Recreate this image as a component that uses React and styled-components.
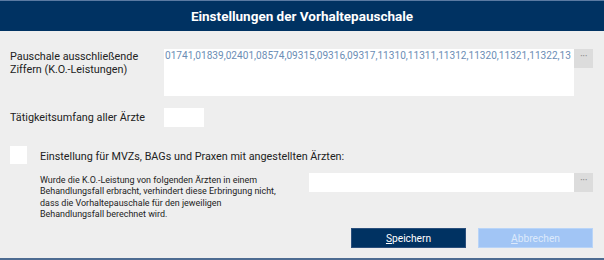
import React from "react";
import styled, { createGlobalStyle } from "styled-components";

const GlobalStyle = createGlobalStyle`
  html, body {
    margin: 0;
    padding: 0;
    background: #eeeeee;
  }
  body {
    font-family: Roboto, "Liberation Sans", sans-serif;
  }
`;

const Dialog = styled.div`
  width: 604px;
  height: 260px;
  box-sizing: border-box;
  background: #eeeeee;
  border-bottom: 2px solid #4d6b91;
  display: flex;
  flex-direction: column;
`;

const Header = styled.div`
  height: 31px;
  box-sizing: border-box;
  background: #003262;
  border-top: 1px solid #5a7aa2;
  color: #fff;
  font-weight: 700;
  font-size: 13.5px;
  display: flex;
  align-items: center;
  justify-content: center;
`;

const Body = styled.div`
  padding: 18px 11px 0 10px;
  display: flex;
  flex-direction: column;
`;

const Row = styled.div`
  display: flex;
  align-items: ${({ top }) => (top ? "flex-start" : "center")};
  margin-top: ${({ mt }) => mt || 0}px;
`;

const Label = styled.div`
  width: 154px;
  font-size: 10.8px;
  line-height: 13px;
  color: #222;
  padding-top: ${({ pt }) => pt || 0}px;
`;

const Area = styled.div`
  width: 410px;
  height: 47px;
  background: #fff;
  overflow: hidden;
  white-space: nowrap;
  font-size: 10.1px;
  color: #6b8db5;
  padding: 1px 0 0 1px;
  box-sizing: border-box;
`;

const Dots = styled.div`
  width: 19px;
  height: 19px;
  background: #dcdcdc;
  color: #8a8a8a;
  font-size: 11px;
  line-height: 16px;
  text-align: center;
  letter-spacing: -0.5px;
`;

const SmallInput = styled.div`
  width: ${({ w }) => w}px;
  height: 19px;
  background: #fff;
`;

const Check = styled.div`
  width: 17px;
  height: 18px;
  background: #fff;
  margin-right: 13px;
`;

const Heading = styled.div`
  font-size: 10.8px;
  color: #222;
  padding-top: 3px;
`;

const Note = styled.div`
  margin-left: 30px;
  padding-top: 4px;
  font-size: 8.95px;
  line-height: 11.3px;
  white-space: nowrap;
  color: #222;
`;

const Spacer = styled.div`
  flex: 1;
`;

const Buttons = styled.div`
  display: flex;
  justify-content: flex-end;
  gap: 12px;
  margin-top: 8px;
`;

const Button = styled.div`
  width: 115px;
  height: 20px;
  box-sizing: border-box;
  background: ${({ primary }) => (primary ? "#003262" : "#a1c5f5")};
  border: 1px solid ${({ primary }) => (primary ? "#2a4f7c" : "#b8d4f8")};
  color: ${({ primary }) => (primary ? "#fff" : "#dce9fb")};
  font-size: 10.2px;
  display: flex;
  align-items: center;
  justify-content: center;
  u {
    text-decoration: underline;
  }
`;

export default function App() {
  return (
    <>
      <GlobalStyle />
      <Dialog>
        <Header>Einstellungen der Vorhaltepauschale</Header>
        <Body>
          <Row top>
            <Label pt={1}>
              Pauschale ausschließende
              <br />
              Ziffern (K.O.-Leistungen)
            </Label>
            <Area>
              01741,01839,02401,08574,09315,09316,09317,11310,11311,11312,11320,11321,11322,13
            </Area>
            <Dots>···</Dots>
          </Row>
          <Row mt={12}>
            <Label>Tätigkeitsumfang aller Ärzte</Label>
            <SmallInput w={40} />
          </Row>
          <Row mt={19}>
            <Check />
            <Heading>Einstellung für MVZs, BAGs und Praxen mit angestellten Ärzten:</Heading>
          </Row>
          <Row top mt={7}>
            <Note>
              Wurde die K.O.-Leistung von folgenden Ärzten in einem
              <br />
              Behandlungsfall erbracht, verhindert diese Erbringung nicht,
              <br />
              dass die Vorhaltepauschale für den jeweiligen
              <br />
              Behandlungsfall berechnet wird.
            </Note>
            <Spacer />
            <SmallInput w={265} style={{ marginTop: 2 }} />
            <Dots style={{ marginTop: 2 }}>···</Dots>
          </Row>
          <Buttons>
            <Button primary>
              <span><u>S</u>peichern</span>
            </Button>
            <Button>
              <span><u>A</u>bbrechen</span>
            </Button>
          </Buttons>
        </Body>
      </Dialog>
    </>
  );
}
